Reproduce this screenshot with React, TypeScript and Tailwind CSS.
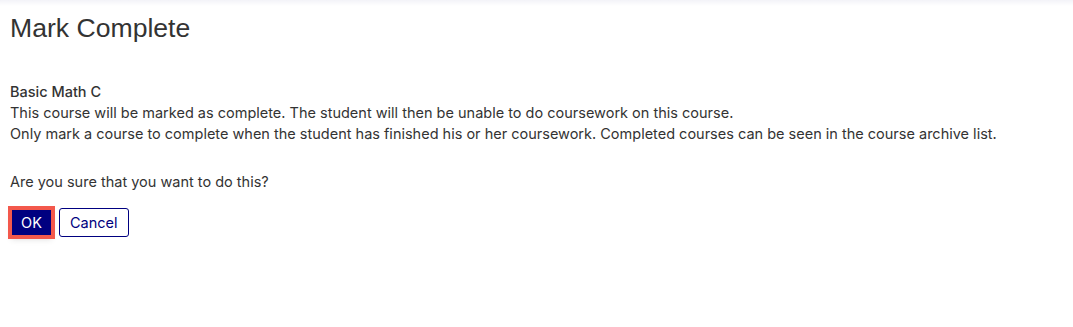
export default function App() {
  return (
    <div className="min-h-[327px] bg-white text-[#333333]">
      {/* header shadow strip */}
      <div className="h-[6px] bg-gradient-to-b from-[#f3f3f8] to-white" />

      <div className="px-[10px]">
        <h1 className="mt-[7px] text-[26.6px] leading-[31px] font-normal font-['Liberation_Sans',Arial,sans-serif] text-[#333333]">
          Mark Complete
        </h1>

        <div className="mt-[37px] text-[14.5px] leading-[21px] font-[Inter,sans-serif]">
          <div className="font-medium">Basic Math C</div>
          <div>This course will be marked as complete. The student will then be unable to do coursework on this course.</div>
          <div>
            Only mark a course to complete when the student has finished his or her coursework. Completed courses can be
            seen in the course archive list.
          </div>

          <p className="mt-[27px]">Are you sure that you want to do this?</p>

          <div className="mt-[16px] flex items-center gap-[6px]">
            <button
              type="button"
              className="h-[29px] w-[43px] border-2 border-[#f3584c] outline-2 outline-[#f3584c] bg-[#000080] text-white shadow-md"
            >
              OK
            </button>
            <button
              type="button"
              className="h-[29px] px-[10px] rounded-[3px] border border-[#000080] bg-white text-[#000080]"
            >
              Cancel
            </button>
          </div>
        </div>
      </div>
    </div>
  )
}
